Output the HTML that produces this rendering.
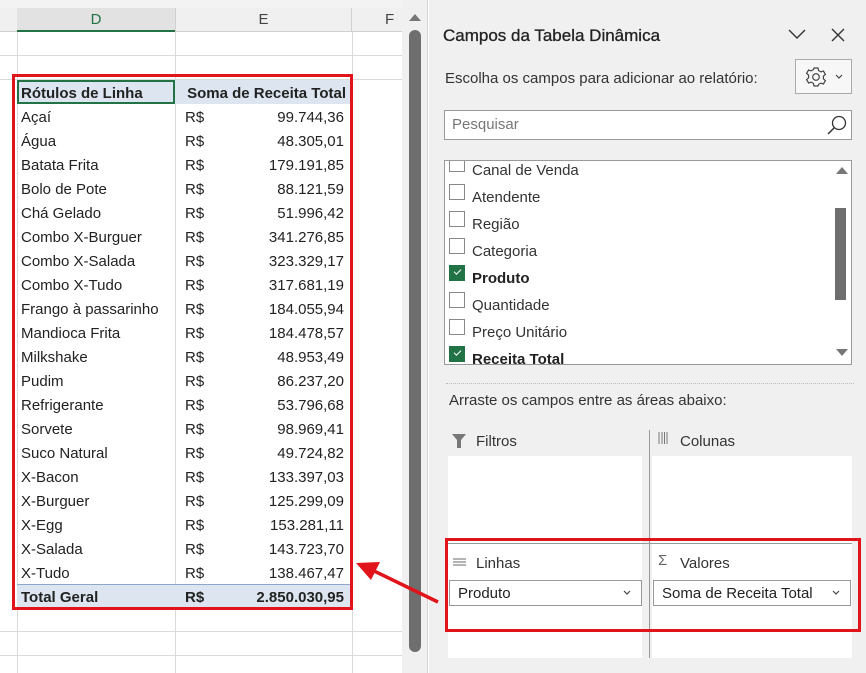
<!DOCTYPE html>
<html><head><meta charset="utf-8"><style>
*{margin:0;padding:0;box-sizing:border-box}
body{width:866px;height:673px;overflow:hidden;background:#fff;font-family:"Liberation Sans",sans-serif;position:relative;color:#222}
.a{position:absolute;white-space:nowrap}
.hl{position:absolute;left:0;width:402px;height:1px;background:#dadada}
.vl{position:absolute;top:32px;width:1px;height:641px;background:#dadada}
.r{position:absolute;left:17px;width:335px;height:24px;font-size:15px;line-height:24px}
.r span{position:absolute;top:2px}
.cb{position:absolute;left:449px;width:16px;height:16px;border:1px solid #888;background:#fff}
.ck{background:#217346;border-color:#217346}
.ck:after{content:"";position:absolute;left:4px;top:3px;width:6px;height:3px;border-left:1.5px solid #fff;border-bottom:1.5px solid #fff;transform:rotate(-45deg)}
.fl{position:absolute;left:472px;font-size:15px;color:#333}
</style></head><body>
<div class="a" style="left:0;top:0;width:402px;height:8px;background:#f3f3f3"></div>
<div class="a" style="left:0;top:8px;width:402px;height:24px;background:#f0f0f0;border-bottom:1px solid #d0d0d0"></div>
<div class="a" style="left:17px;top:8px;width:158px;height:24px;background:#e2e2e2;border-bottom:2px solid #217346;text-align:center;font-size:15px;line-height:23px;color:#217346">D</div>
<div class="a" style="left:175px;top:8px;width:177px;height:24px;text-align:center;font-size:15px;line-height:23px;color:#444;border-left:1px solid #d0d0d0;border-right:1px solid #d0d0d0">E</div>
<div class="a" style="left:385px;top:8px;font-size:15px;line-height:23px;color:#444">F</div>
<div class="vl" style="left:17px"></div><div class="vl" style="left:175px"></div><div class="vl" style="left:352px"></div>
<div class="hl" style="top:55px"></div><div class="hl" style="top:79px"></div>
<div class="hl" style="top:631px"></div><div class="hl" style="top:655px"></div>
<div class="a" style="left:17px;top:80px;width:335px;height:24px;background:#dde6f0"></div>
<div class="a" style="left:17px;top:80px;width:158px;height:24px;border:2px solid #217346"></div>
<div class="r" style="top:80px;font-weight:bold"><span style="left:4px">Rótulos de Linha</span><span style="right:6px">Soma de Receita Total</span></div>
<div id="rows"></div>
<div class="a" style="left:17px;top:584px;width:335px;height:24px;background:#dde6f0;border-top:1px solid #8ea9c8"></div>
<div class="r" style="top:584px;font-weight:bold"><span style="left:4px">Total Geral</span><span style="left:168px">R$</span><span style="right:8px">2.850.030,95</span></div>
<div class="a" style="left:12px;top:74px;width:341px;height:536px;border:3px solid #e0141a"></div>
<div class="a" style="left:402px;top:0;width:26px;height:673px;background:#f0f0f0;border-right:1px solid #d6d6d6"></div>
<div class="a" style="left:409px;top:14px;width:0;height:0;border-left:6px solid transparent;border-right:6px solid transparent;border-bottom:7px solid #777"></div>
<div class="a" style="left:409px;top:30px;width:12px;height:622px;background:#6e6e6e;border-radius:6px"></div>
<div class="a" style="left:429px;top:0;width:437px;height:673px;background:#f0f0f0"></div>
<div class="a" style="left:443px;top:26px;font-size:17px;color:#222;-webkit-text-stroke:0.3px #222">Campos da Tabela Dinâmica</div>
<svg class="a" style="left:788px;top:28px" width="18" height="12"><path d="M1 2 L9 10 L17 2" fill="none" stroke="#333" stroke-width="1.4"/></svg>
<svg class="a" style="left:831px;top:28px" width="14" height="14"><path d="M1 1 L13 13 M13 1 L1 13" stroke="#333" stroke-width="1.4"/></svg>
<div class="a" style="left:445px;top:70px;font-size:15px;color:#333">Escolha os campos para adicionar ao relatório:</div>
<div class="a" style="left:795px;top:59px;width:57px;height:35px;border:1px solid #aaa;background:#f7f7f7"></div>
<svg class="a" style="left:805px;top:66px" width="22" height="22" viewBox="0 0 22 22"><path d="M9 2h4l.6 2.6 2.3 1.3 2.5-.9 2 3.4-2 1.8v2.6l2 1.8-2 3.4-2.5-.9-2.3 1.3L13 20H9l-.6-2.6-2.3-1.3-2.5.9-2-3.4 2-1.8V9.2l-2-1.8 2-3.4 2.5.9 2.3-1.3z" fill="none" stroke="#444" stroke-width="1.2"/><circle cx="11" cy="11" r="3.3" fill="none" stroke="#444" stroke-width="1.2"/></svg>
<svg class="a" style="left:835px;top:74px" width="8" height="6"><path d="M1 1 L4 4 L7 1" fill="none" stroke="#444" stroke-width="1.2"/></svg>
<div class="a" style="left:444px;top:110px;width:408px;height:30px;border:1px solid #999;background:#fff"></div>
<div class="a" style="left:452px;top:116px;font-size:15px;color:#777">Pesquisar</div>
<svg class="a" style="left:825px;top:113px" width="24" height="24"><circle cx="14" cy="10" r="6.5" fill="none" stroke="#333" stroke-width="1.3"/><path d="M9.5 14.5 L3 21" stroke="#333" stroke-width="1.5"/></svg>
<div class="a" style="left:444px;top:160px;width:408px;height:205px;border:1px solid #999;background:#fff;overflow:hidden"></div>
<div class="a" style="left:445px;top:161px;width:406px;height:203px;overflow:hidden">
 <div class="cb" style="left:4px;top:-5px"></div><div class="fl" style="left:27px;top:1px">Canal de Venda</div>
 <div class="cb" style="left:4px;top:23px"></div><div class="fl" style="left:27px;top:28px">Atendente</div>
 <div class="cb" style="left:4px;top:50px"></div><div class="fl" style="left:27px;top:55px">Região</div>
 <div class="cb" style="left:4px;top:77px"></div><div class="fl" style="left:27px;top:82px">Categoria</div>
 <div class="cb ck" style="left:4px;top:104px"></div><div class="fl" style="left:27px;top:109px;font-weight:bold;color:#222">Produto</div>
 <div class="cb" style="left:4px;top:131px"></div><div class="fl" style="left:27px;top:136px">Quantidade</div>
 <div class="cb" style="left:4px;top:158px"></div><div class="fl" style="left:27px;top:163px">Preço Unitário</div>
 <div class="cb ck" style="left:4px;top:185px"></div><div class="fl" style="left:27px;top:190px;font-weight:bold;color:#222">Receita Total</div>
 <div class="a" style="left:388px;top:0;width:18px;height:203px;background:#fff"></div>
 <div class="a" style="left:391px;top:6px;border-left:6px solid transparent;border-right:6px solid transparent;border-bottom:7px solid #777"></div>
 <div class="a" style="left:390px;top:47px;width:11px;height:92px;background:#6e6e6e"></div>
 <div class="a" style="left:391px;top:188px;border-left:6px solid transparent;border-right:6px solid transparent;border-top:7px solid #777"></div>
</div>
<div class="a" style="left:446px;top:383px;width:408px;border-top:1px dotted #bbb"></div>
<div class="a" style="left:449px;top:392px;font-size:15px;color:#333">Arraste os campos entre as áreas abaixo:</div>
<svg class="a" style="left:452px;top:434px" width="14" height="14"><path d="M0 0H14L9 6V14H5V6Z" fill="#777"/></svg>
<div class="a" style="left:476px;top:433px;font-size:15px;color:#333">Filtros</div>
<svg class="a" style="left:658px;top:432px" width="10" height="12"><path d="M1 0V12M4 0V12M6.5 0V12M9 0V12" stroke="#777" stroke-width="1"/></svg>
<div class="a" style="left:680px;top:433px;font-size:15px;color:#333">Colunas</div>
<div class="a" style="left:448px;top:456px;width:194px;height:202px;background:#fff"></div>
<div class="a" style="left:652px;top:456px;width:200px;height:202px;background:#fff"></div>
<div class="a" style="left:649px;top:430px;width:1px;height:228px;background:#999"></div>
<div class="a" style="left:448px;top:543px;width:404px;height:1px;background:#999"></div>
<svg class="a" style="left:453px;top:558px" width="13" height="10"><path d="M0 1H13M0 4H13M0 7H13" stroke="#888" stroke-width="1.2"/></svg>
<div class="a" style="left:476px;top:555px;font-size:15px;color:#333">Linhas</div>
<div class="a" style="left:658px;top:552px;font-size:15px;color:#666">Σ</div>
<div class="a" style="left:680px;top:555px;font-size:15px;color:#333">Valores</div>
<div class="a" style="left:449px;top:580px;width:193px;height:26px;border:1px solid #999;background:#fff"></div>
<div class="a" style="left:458px;top:585px;font-size:15px;color:#222">Produto</div>
<svg class="a" style="left:623px;top:590px" width="8" height="6"><path d="M1 1 L4 4 L7 1" fill="none" stroke="#444" stroke-width="1.2"/></svg>
<div class="a" style="left:653px;top:580px;width:198px;height:26px;border:1px solid #999;background:#fff"></div>
<div class="a" style="left:662px;top:585px;font-size:15px;color:#222">Soma de Receita Total</div>
<svg class="a" style="left:832px;top:590px" width="8" height="6"><path d="M1 1 L4 4 L7 1" fill="none" stroke="#444" stroke-width="1.2"/></svg>
<div class="a" style="left:445px;top:538px;width:416px;height:94px;border:3px solid #e0141a"></div>
<svg class="a" style="left:0;top:0" width="866" height="673"><path d="M438 602 L372 570" stroke="#e0141a" stroke-width="3.5"/><path d="M356 563 L380 562 L371 580 Z" fill="#e0141a"/></svg>
<script>
var d=[["Açaí","99.744,36"],["Água","48.305,01"],["Batata Frita","179.191,85"],["Bolo de Pote","88.121,59"],["Chá Gelado","51.996,42"],["Combo X-Burguer","341.276,85"],["Combo X-Salada","323.329,17"],["Combo X-Tudo","317.681,19"],["Frango à passarinho","184.055,94"],["Mandioca Frita","184.478,57"],["Milkshake","48.953,49"],["Pudim","86.237,20"],["Refrigerante","53.796,68"],["Sorvete","98.969,41"],["Suco Natural","49.724,82"],["X-Bacon","133.397,03"],["X-Burguer","125.299,09"],["X-Egg","153.281,11"],["X-Salada","143.723,70"],["X-Tudo","138.467,47"]];
var h="";d.forEach(function(x,i){h+='<div class="r" style="top:'+(104+i*24)+'px"><span style="left:4px">'+x[0]+'</span><span style="left:168px">R$</span><span style="right:8px">'+x[1]+'</span></div>';});
document.getElementById("rows").innerHTML=h;
</script>
</body></html>
